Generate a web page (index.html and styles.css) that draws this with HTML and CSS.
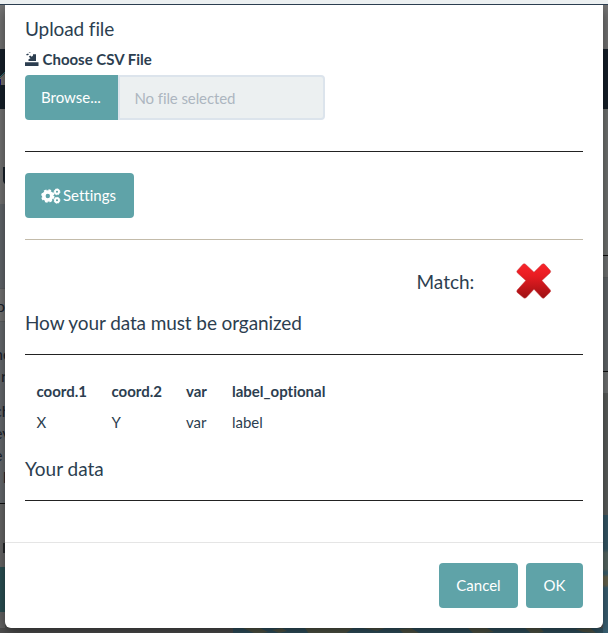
FILE: index.html
```
<!DOCTYPE html>
<html lang="en">
<head>
<meta charset="utf-8">
<title>Upload file</title>
<link rel="stylesheet" href="styles.css">
</head>
<body>
<div class="topbar"></div>
<div class="stage">
  <div class="page left">
    <div class="seg head"></div>
    <div class="seg nav"><svg class="house" width="5" height="18" viewBox="0 0 5 18"><path d="M0 7 5 2v12H0z" fill="#77736f"/><path d="M0 6 5 1" stroke="#31747b" fill="none"/><path d="M0 8h1v6H0z" fill="#171775"/></svg></div>
    <div class="seg title"><i class="tab"></i></div>
    <div class="seg slate"></div>
    <div class="seg field"><span class="crop one">o</span></div>
    <div class="seg prose"><span class="crop">ne</span><span class="crop r">r</span><span class="crop gap">ch</span><span class="crop">ev</span><span class="crop e">e</span><span class="crop h">h</span></div>
    <div class="seg low"><i class="mark"></i></div>
    <div class="seg teal"></div>
    <div class="seg end"></div>
  </div>
  <div class="page right">
    <div class="seg head"></div>
    <div class="seg nav"></div>
    <div class="seg r1"></div>
    <div class="seg r2"></div>
    <div class="seg r3"></div>
    <div class="seg r4"></div>
    <div class="seg r5"></div>
    <div class="seg map"></div>
  </div>
  <div class="under">
    <svg width="370" height="6" viewBox="0 0 370 6"><path fill="#315260" d="M0 0h370v6H0z"/><path fill="#525748" d="M10 0h17l8 4-12 2zM39 2l10-2 5 3-8 2zM72 0h48l-8 6H76zM130 0h22l-8 3zM166 1l12-1 8 5-15 1zM235 0h19l7 4-20 2zM292 0h15l4 4-12 2zM342 1l15-1 6 5-13-1z"/></svg>
  </div>
  <div class="modal">
    <div class="body">
      <h4 class="upload">Upload file</h4>
      <div class="label">
        <svg width="14" height="15" viewBox="0 0 14 15" fill="#2c3e50"><path d="M0 10.2h13.5v3.8H0zM3.5 9V7.2l2-1L3.8 4.8 5.2 3.4l1.6 1.4L8 3.6V2.2h3V9zM1 2.6l2-1.1 1 1-2 1.1zM3.5.6l1.6-.5.4 1z"/></svg>
        <span>Choose CSV File</span>
      </div>
      <div class="file"><span class="browse">Browse...</span><span class="name">No file selected</span></div>
      <div class="rule first"></div>
      <button class="btn settings"><svg width="20" height="16" viewBox="0 0 20 16"><g fill="none" stroke="#fff"><circle cx="6.8" cy="8" r="4" stroke-width="3.6"/><circle cx="6.8" cy="8" r="5.8" stroke-width="1.8" stroke-dasharray="2.6 1.95"/><circle cx="16" cy="3.8" r="2" stroke-width="1.9"/><circle cx="16" cy="3.8" r="2.9" stroke-width="1" stroke-dasharray="1.3 .98"/><circle cx="16" cy="12.3" r="2" stroke-width="1.9"/><circle cx="16" cy="12.3" r="2.9" stroke-width="1" stroke-dasharray="1.3 .98"/></g></svg><span>Settings</span></button>
      <div class="rule tan"></div>
      <div class="match">
        <h4>Match:</h4>
        <svg width="36" height="36" viewBox="0 0 36 36"><defs><linearGradient id="red" x2="0" y2="1"><stop offset="0" stop-color="#f8242a"/><stop offset=".35" stop-color="#e81c22"/><stop offset="1" stop-color="#9d1013"/></linearGradient></defs><path fill="url(#red)" stroke="#c4373a" stroke-width=".5" d="M7 1.2Q8.2.3 9.5 1.3L18 9.2 26 1.3Q27.4.3 28.7 1.3L34.3 7.6Q35.2 8.8 34 9.9L25.9 17.5 34.3 27Q35.2 28.2 34 29.3L28.4 34.7Q27 35.8 25.8 34.6L18 26.2 10.3 34.5Q9 35.6 7.6 34.8L1.2 29.4Q.3 28.3 1.2 27L9.8 17.5 1.3 9.8Q.3 8.7 1.3 7.5Z"/></svg>
      </div>
      <h4 class="how">How your data must be organized</h4>
      <div class="rule"></div>
      <table>
        <tr><th>coord.1</th><th>coord.2</th><th>var</th><th>label_optional</th></tr>
        <tr><td>X</td><td>Y</td><td>var</td><td>label</td></tr>
      </table>
      <h4 class="yours">Your data</h4>
      <div class="rule"></div>
    </div>
    <div class="footer"><button class="btn cancel">Cancel</button><button class="btn ok">OK</button></div>
  </div>
</div>
</body>
</html>
```
FILE: styles.css
```
* { box-sizing: border-box; }
body { margin: 0; height: 633px; overflow: hidden; font: 15px/21px Lato, sans-serif; color: #2c3e50; }
.topbar { height: 5px; background: #ecf0f1; border-bottom: 1px solid #2c3e50; }
.stage { display: grid; grid-template-columns: 5px 598px 5px; grid-template-rows: 623px 5px; background: #505050; overflow: hidden; }
.page { display: flex; flex-direction: column; overflow: hidden; grid-row: 1 / 3; }
.left { grid-column: 1; }
.right { grid-column: 3; }
.seg { flex: none; width: 5px; overflow: hidden; }
.head { height: 44px; background: #777; }
.nav { height: 60px; background: #16202a; }
.house { display: block; margin-top: 22px; }
.title { height: 95px; background: #777; padding: 58px 0 0 3px; }
.tab { display: block; width: 5px; height: 18px; background: #17212b; border-radius: 0 0 0 5px; }
.slate { height: 84px; background: #65696e; }
.field { height: 34px; background: #777; border-top: 1px solid #5f6265; border-bottom: 1px solid #5f6265; padding-top: 6px; }
.prose { height: 182px; background: #696d71; border-bottom: 1px solid #111; padding-top: 21px; }
.crop { display: block; white-space: nowrap; font-size: 16px; line-height: 22px; color: #1b232d; margin-left: -6px; }
.one { margin-left: -4px; }
.r { margin-left: 1px; }
.gap { margin-top: 13px; }
.e { margin-left: -6px; }
.h { margin-left: 3px; }
.low { height: 63px; background: #696969; padding: 39px 0 0 3px; }
.mark { display: block; width: 2px; height: 10px; background: #26292c; }
.teal { height: 45px; background: #2b5255; }
.end { height: 16px; background: #656565; }
.right .r1 { height: 147px; background: #737674; border-bottom: 1px solid #111; margin: 0; }
.r2 { height: 22px; background: #747776; border-bottom: 1px solid #606466; }
.r3 { height: 94px; background: #64696c; border-bottom: 1px solid #111; }
.r4 { height: 21px; background: #747777; }
.r5 { height: 122px; background: #5e615f; }
.map { flex: 1; background: linear-gradient(#365a69 0 34px, #596965 38px 54px, #3d6372 57px 59px, #696750 62px 70px, #3b6376 73px 100%); }
.under { grid-area: 2 / 2; display: flex; justify-content: flex-end; overflow: hidden; }
.under svg { flex: none; }
.modal { grid-area: 1 / 2; z-index: 1; background: #fff; border-radius: 0 0 6px 6px; box-shadow: 0 4px 14px rgba(0,0,0,.5); display: flex; flex-direction: column; }
.body { height: 537px; padding: 13px 20px 0; }
h4 { margin: 0; font-size: 19px; font-weight: 400; line-height: 21px; }
.upload { letter-spacing: -.1px; font-variant-ligatures: common-ligatures; }
.label { display: flex; align-items: center; gap: 3.5px; height: 21px; margin-top: 10px; font-weight: 700; }
.file { display: flex; width: 300px; height: 45px; margin-top: 5px; line-height: 45px; }
.browse { width: 93px; padding-left: 16px; background: #5fa3a8; color: #fff; border-radius: 4px 0 0 4px; }
.name { flex: 1; border: 2px solid #dce4ec; border-radius: 0 4px 4px 0; background: #ecf0f1; color: #acb6c0; padding-left: 14.5px; line-height: 43px; letter-spacing: -.1px; }
.rule { height: 1px; background: #222; }
.first { margin-top: 31px; }
.btn { border: 0; border-radius: 4px; background: #5fa3a8; color: #fff; font: 15px/21px Lato, sans-serif; height: 45px; padding: 0; }
.settings { width: 109px; margin-top: 21px; display: flex; align-items: center; padding-left: 16px; gap: 2px; font-variant-ligatures: none; }
.tan { margin-top: 21px; background: #c3bbaa; }
.match { display: flex; align-items: center; height: 36px; margin-top: 23px; padding-left: 391.5px; }
.match svg { margin-left: 41.5px; flex: none; }
.how { margin: 13px 0 21px; letter-spacing: -.1px; }
table { border-collapse: collapse; margin: 21px 0 0; font-variant-ligatures: none; }
th, td { padding: 5px 12px; height: 31px; text-align: left; }
th:first-child, td:first-child { padding-left: 11.5px; padding-right: 12.5px; }
th:last-child, td:last-child { padding-left: 13px; }
.yours { margin: 20px 0 21px; }
.footer { flex: 1; display: flex; justify-content: flex-end; gap: 8px; padding: 20px 20px 0; border-top: 1px solid #e5e5e5; }
.cancel { width: 79px; }
.ok { width: 57px; }
```
